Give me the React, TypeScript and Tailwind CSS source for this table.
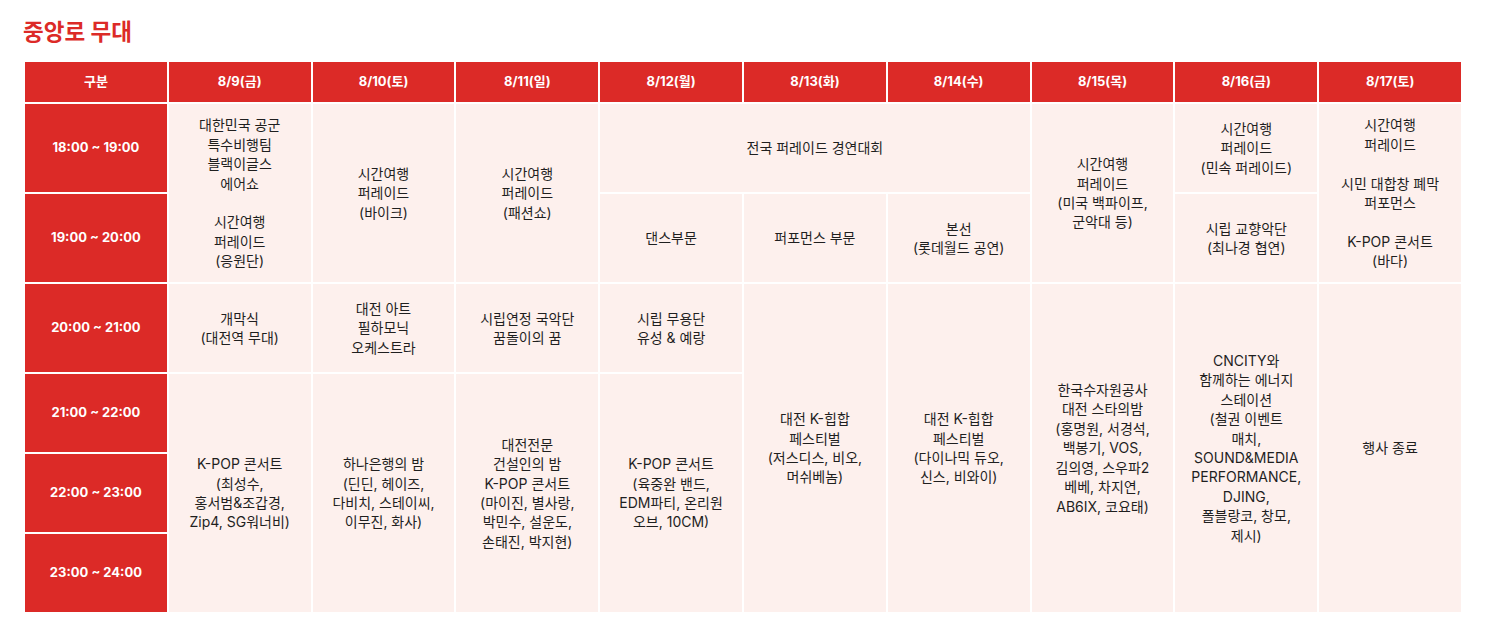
import React from "react";

const FONT = { fontFamily: 'Inter, "Noto Sans CJK KR", sans-serif' };

const days = ["구분", "8/9(금)", "8/10(토)", "8/11(일)", "8/12(월)", "8/13(화)", "8/14(수)", "8/15(목)", "8/16(금)", "8/17(토)"];
const times = ["18:00 ~ 19:00", "19:00 ~ 20:00", "20:00 ~ 21:00", "21:00 ~ 22:00", "22:00 ~ 23:00", "23:00 ~ 24:00"];
const timeRows = ["row-start-2", "row-start-3", "row-start-4", "row-start-5", "row-start-6", "row-start-7"];

function Cell({ pos, lines }: { pos: string; lines: string[] }) {
  return (
    <div className={`${pos} flex items-center justify-center bg-[#fdf0ed] px-2 text-center text-[14px] leading-[19.4px] text-[#1f1f1f]`}>
      <div>
        {lines.map((l, i) => (
          <div key={i} className="whitespace-nowrap">{l === "" ? "\u00a0" : l}</div>
        ))}
      </div>
    </div>
  );
}

export default function App() {
  return (
    <div className="bg-white pl-[25px] pt-[14px]" style={FONT}>
      <h1 className="-ml-[2px] text-[22.5px] font-bold leading-[36px] text-[#dc2a27]">중앙로 무대</h1>
      <div className="mt-[12px] grid w-[1436px] grid-cols-10 grid-rows-[40px_88px_88px_88px_78px_78px_78px] gap-[2px]">
        {days.map((d) => (
          <div key={d} className="flex items-center justify-center bg-[#dc2a27] text-[13px] font-bold text-white">
            {d}
          </div>
        ))}
        {times.map((t, i) => (
          <div key={t} className={`col-start-1 ${timeRows[i]} flex items-center justify-center bg-[#dc2a27] text-[13px] font-bold text-white`}>
            {t}
          </div>
        ))}

        {/* 8/9 */}
        <Cell pos="col-start-2 row-start-2 row-span-2" lines={["대한민국 공군", "특수비행팀", "블랙이글스", "에어쇼", "", "시간여행", "퍼레이드", "(응원단)"]} />
        <Cell pos="col-start-2 row-start-4" lines={["개막식", "(대전역 무대)"]} />
        <Cell pos="col-start-2 row-start-5 row-span-3" lines={["K-POP 콘서트", "(최성수,", "홍서범&조갑경,", "Zip4, SG워너비)"]} />

        {/* 8/10 */}
        <Cell pos="col-start-3 row-start-2 row-span-2" lines={["시간여행", "퍼레이드", "(바이크)"]} />
        <Cell pos="col-start-3 row-start-4" lines={["대전 아트", "필하모닉", "오케스트라"]} />
        <Cell pos="col-start-3 row-start-5 row-span-3" lines={["하나은행의 밤", "(딘딘, 헤이즈,", "다비치, 스테이씨,", "이무진, 화사)"]} />

        {/* 8/11 */}
        <Cell pos="col-start-4 row-start-2 row-span-2" lines={["시간여행", "퍼레이드", "(패션쇼)"]} />
        <Cell pos="col-start-4 row-start-4" lines={["시립연정 국악단", "꿈돌이의 꿈"]} />
        <Cell pos="col-start-4 row-start-5 row-span-3" lines={["대전전문", "건설인의 밤", "K-POP 콘서트", "(마이진, 별사랑,", "박민수, 설운도,", "손태진, 박지현)"]} />

        {/* 8/12 - 8/14 */}
        <Cell pos="col-start-5 col-span-3 row-start-2" lines={["전국 퍼레이드 경연대회"]} />
        <Cell pos="col-start-5 row-start-3" lines={["댄스부문"]} />
        <Cell pos="col-start-6 row-start-3" lines={["퍼포먼스 부문"]} />
        <Cell pos="col-start-7 row-start-3" lines={["본선", "(롯데월드 공연)"]} />
        <Cell pos="col-start-5 row-start-4" lines={["시립 무용단", "유성 & 예랑"]} />
        <Cell pos="col-start-5 row-start-5 row-span-3" lines={["K-POP 콘서트", "(육중완 밴드,", "EDM파티, 온리원", "오브, 10CM)"]} />
        <Cell pos="col-start-6 row-start-4 row-span-4" lines={["대전 K-힙합", "페스티벌", "(저스디스, 비오,", "머쉬베놈)"]} />
        <Cell pos="col-start-7 row-start-4 row-span-4" lines={["대전 K-힙합", "페스티벌", "(다이나믹 듀오,", "신스, 비와이)"]} />

        {/* 8/15 */}
        <Cell pos="col-start-8 row-start-2 row-span-2" lines={["시간여행", "퍼레이드", "(미국 백파이프,", "군악대 등)"]} />
        <Cell pos="col-start-8 row-start-4 row-span-4" lines={["한국수자원공사", "대전 스타의밤", "(홍명원, 서경석,", "백봉기, VOS,", "김의영, 스우파2", "베베, 차지연,", "AB6IX, 코요태)"]} />

        {/* 8/16 */}
        <Cell pos="col-start-9 row-start-2" lines={["시간여행", "퍼레이드", "(민속 퍼레이드)"]} />
        <Cell pos="col-start-9 row-start-3" lines={["시립 교향악단", "(최나경 협연)"]} />
        <Cell pos="col-start-9 row-start-4 row-span-4" lines={["CNCITY와", "함께하는 에너지", "스테이션", "(철권 이벤트", "매치,", "SOUND&MEDIA", "PERFORMANCE,", "DJING,", "폴블랑코, 창모,", "제시)"]} />

        {/* 8/17 */}
        <Cell pos="col-start-10 row-start-2 row-span-2" lines={["시간여행", "퍼레이드", "", "시민 대합창 폐막", "퍼포먼스", "", "K-POP 콘서트", "(바다)"]} />
        <Cell pos="col-start-10 row-start-4 row-span-4" lines={["행사 종료"]} />
      </div>
    </div>
  );
}
